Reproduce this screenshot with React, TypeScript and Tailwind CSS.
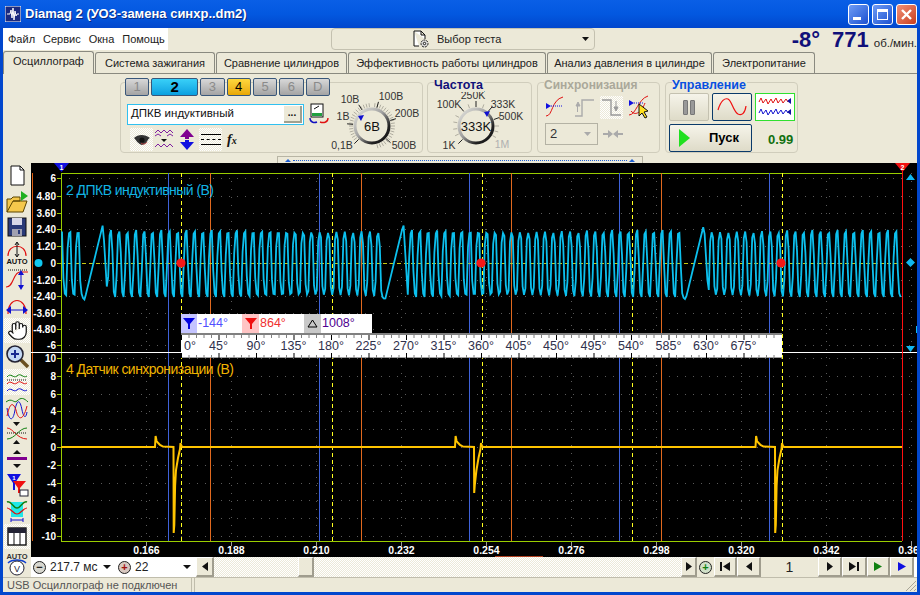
import React from 'react';
import { Hand } from 'lucide-react';

const cyanY = (x: number) => {
    const p = (((x - 84.5) % 300.5) + 300.5) % 300.5;
    if (p < 18.5) return 300 - (p / 18.5) * 76;
    if (p < 23) return 224 + ((p - 18.5) / 4.5) * 74;
    if (p > 297.9) return 297 + (p - 297.9);
    const th = ((p - 22) / 8.36) * 2 * Math.PI - Math.PI / 2;
    const n = Math.floor((p - 22) / 8.36);
    const s = Math.sin(th) + 0.16 * Math.sin(3 * th + 0.4);
    const top = 230 + (n % 3) * 1.5;
    return Math.max(top, Math.min(297, 263.5 - 37 * s));
};

const cyanPath = () => {
    let d = '';
    for (let x = 62; x <= 901; x += 1.4) {
        d += `${d ? 'L' : 'M'}${x.toFixed(1)} ${cyanY(x).toFixed(1)}`;
    }
    return d;
};

const spike = (xp: number, xn: number, deep: number) =>
    `L${xp} 447L${xp + 0.6} 436L${xp + 1.6} 441L${xp + 3.2} 443L${xp + 5} 445L${xp + 8} 446.6L${xn} 447L${xn + 0.2} ${deep}L${xn + 0.8} ${deep - 8}L${xn + 1.6} ${Math.min(deep - 15, 486)}L${xn + 2.5} 470L${xn + 4.5} 458L${xn + 6.5} 449L${xn + 7} 443L${xn + 8} 446L${xn + 9} 447`;

const yellowPath = `M61 447${spike(155, 173.5, 533)}${spike(455, 474, 493)}${spike(755.5, 775, 533)}L902 447`;

const topTicks = [
    ['6', 178], ['4.80', 196], ['3.60', 213], ['2.40', 229], ['1.20', 246], ['0', 263],
    ['-1.20', 280], ['-2.40', 296], ['-3.60', 313], ['-4.80', 329], ['-6', 345],
] as const;
const bottomTicks = [
    ['10', 358], ['8', 376], ['6', 394], ['4', 411], ['2', 429], ['0', 447],
    ['-2', 465], ['-4', 483], ['-6', 500], ['-8', 518], ['-10', 536],
] as const;
const timeLabels = ['0.166', '0.188', '0.210', '0.232', '0.254', '0.276', '0.298', '0.320', '0.342', '0.364'];
const blueX = [168.5, 319.5, 469.5, 619.5, 769.5];
const yellowX = [181.5, 332.5, 482.5, 632.5, 782.5];
const orangeX = [210.5, 361.5, 511.5, 661.5];

const Plot = () => (
    <svg viewBox="31 163 886 394" className="block w-[886px] h-[394px] bg-black font-['Liberation_Sans',sans-serif]">
        {[...topTicks, ...bottomTicks].map(([, y], i) => (
            <g key={i}>
                <line x1={61} x2={917} y1={y + 0.5} y2={y + 0.5} stroke="#5a5a5a" strokeDasharray="1 7" />
                <line x1={57} x2={61} y1={y + 0.5} y2={y + 0.5} stroke="#9acd00" />
            </g>
        ))}
        {timeLabels.map((t, i) => {
            const x = 146.5 + i * 85;
            return (
                <g key={t}>
                    <line x1={x} x2={x} y1={173} y2={541} stroke="#5a5a5a" strokeDasharray="1 7" />
                    <line x1={x} x2={x} y1={541} y2={546} stroke="#9a9a9a" />
                    <text x={x} y={554} fill="#fff" fontSize={10.5} fontWeight={700} textAnchor="middle">{t}</text>
                </g>
            );
        })}
        <path d="M32.5 173V541" stroke="#e06010" />
        <path d="M61.5 173V541M61 173.5H902M61 541.5H902" stroke="#9acd00" fill="none" />
        {blueX.map((x) => <line key={x} x1={x} x2={x} y1={173} y2={541} stroke="#3f62d8" />)}
        {orangeX.map((x) => <line key={x} x1={x} x2={x} y1={173} y2={541} stroke="#e0691f" />)}
        {yellowX.map((x) => <line key={x} x1={x} x2={x} y1={173} y2={541} stroke="#ffff20" strokeDasharray="4 3" />)}
        <line x1={61} x2={902} y1={263.5} y2={263.5} stroke="#c8c810" strokeDasharray="4 3" />
        <path d={cyanPath()} stroke="#0cc0ee" strokeWidth={1.8} fill="none" />
        <path d={yellowPath} stroke="#ffc400" strokeWidth={2} fill="none" />
        <line x1={31} x2={917} y1={352.5} y2={352.5} stroke="#fff" />
        <line x1={902.5} x2={902.5} y1={165} y2={541} stroke="#ff1010" />
        {[181, 481, 781].map((x) => <circle key={x} cx={x} cy={263} r={4.6} fill="#f51818" />)}
        <circle cx={38.5} cy={263} r={4} fill="#10c8f0" />
        <path d="M54 163H69L61.5 172Z" fill="#1010e0" />
        <text x={61.5} y={170} fill="#fff" fontSize={7} fontWeight={700} textAnchor="middle">1</text>
        <path d="M895 163H910L902.5 172Z" fill="#f01010" />
        <text x={902.5} y={170} fill="#fff" fontSize={7} fontWeight={700} textAnchor="middle">2</text>
        <path d="M906 180L910.5 174L915 180ZM906 346L910.5 352L915 346ZM906 262.5L910.5 258L915 262.5L910.5 267Z" fill="#10b8f0" />
        <rect x={916} y={326} width={1} height={7} fill="#10b8f0" />
        <rect x={495} y={556} width={48} height={1} fill="#b04020" />
        {topTicks.map(([t, y]) => (
            <text key={t} x={56} y={y + 4} fill="#fff" fontSize={10} fontWeight={700} textAnchor="end">{t}</text>
        ))}
        {bottomTicks.map(([t, y]) => (
            <text key={t} x={56} y={y + 4} fill="#fff" fontSize={10} fontWeight={700} textAnchor="end">{t}</text>
        ))}
        <text x={66} y={195} fill="#12b4e4" fontSize={14} textLength={148}>2 ДПКВ индуктивный (В)</text>
        <text x={66} y={374} fill="#f0b400" fontSize={14} textLength={168}>4 Датчик синхронизации (В)</text>
    </svg>
);

const degrees = Array.from({ length: 16 }, (_, i) => i * 45);

const AngleRuler = () => (
    <div className="absolute left-[150px] top-[151px] w-[601px] flex flex-col">
        <div className="flex h-[19px] w-[191px] items-center bg-white text-[12.5px] leading-none">
            <span className="flex h-full w-[16px] items-center justify-center bg-[#c4c4ff]">
                <svg width="12" height="11" viewBox="0 0 12 11"><path d="M0 0H12L7 6V11H5V6Z" fill="#0000e0" /></svg>
            </span>
            <span className="w-[45px] pl-[1px] text-[#5050ff]">-144°</span>
            <span className="flex h-full w-[17px] items-center justify-center bg-[#ffc4c4]">
                <svg width="12" height="11" viewBox="0 0 12 11"><path d="M0 0H12L7 6V11H5V6Z" fill="#f01010" /></svg>
            </span>
            <span className="w-[45px] pl-[1px] text-[#f03030]">864°</span>
            <span className="flex h-full w-[17px] items-center justify-center bg-[#c8c8c8]">
                <svg width="11" height="9" viewBox="0 0 11 9"><path d="M5.5 1L10 8H1Z" fill="none" stroke="#000" /></svg>
            </span>
            <span className="pl-[1px] text-[#500090]">1008°</span>
        </div>
        <div className="relative h-[25px] w-[601px] bg-white border-t-2 border-[#808080] border-b border-b-[#a0a0a0]">
            <svg className="absolute inset-0" width="601" height="23">
                {Array.from({ length: 80 }, (_, i) => {
                    const x = 0.5 + i * 7.5;
                    const major = i % 5 === 0;
                    return (
                        <g key={i} stroke={major ? '#000' : '#808080'}>
                            <line x1={x} x2={x} y1={0} y2={major ? 5 : 3} />
                            <line x1={x} x2={x} y1={major ? 18 : 20} y2={23} />
                        </g>
                    );
                })}
            </svg>
            <div className="relative flex h-full items-center text-[12.5px] leading-none whitespace-nowrap text-[#30304c]">
                {degrees.map((d) => (
                    <span key={d} className={d === 0 ? 'w-[18.75px] shrink-0 pl-[3px]' : 'w-[37.5px] shrink-0 text-center'}>{d}°</span>
                ))}
            </div>
        </div>
    </div>
);

type KnobLabel = { t: string; x: number; y: number; dim?: boolean };

const Knob = ({ cx, cy, vb, w, r, ticks, minor, labels, center, pointer, id }: {
    cx: number; cy: number; vb: string; w: number; r: number; ticks: number[]; minor: number[];
    labels: KnobLabel[]; center: string; pointer: [number, number]; id: string;
}) => {
    const ray = (a: number, r1: number, r2: number) => {
        const rad = (a * Math.PI) / 180;
        return { x1: cx + r1 * Math.sin(rad), y1: cy - r1 * Math.cos(rad), x2: cx + r2 * Math.sin(rad), y2: cy - r2 * Math.cos(rad) };
    };
    return (
        <svg viewBox={vb} width={w} height={69} className="shrink-0">
            <defs>
                <linearGradient id={id} x1="0" y1="0" x2="1" y2="1">
                    <stop offset="0" stopColor="#e6e6e0" />
                    <stop offset="0.45" stopColor="#a0a0a0" />
                    <stop offset="0.75" stopColor="#222" />
                    <stop offset="1" stopColor="#111" />
                </linearGradient>
            </defs>
            {minor.map((a) => <line key={a} {...ray(a, r + 2, r + 6)} stroke="#b0ada0" />)}
            {ticks.map((a) => <line key={a} {...ray(a, r + 2, r + 8)} stroke="#222" />)}
            <circle cx={cx} cy={cy} r={r} fill="#ece9d8" stroke={`url(#${id})`} strokeWidth={3} />
            <text x={cx} y={cy + 5} fontSize={13} textAnchor="middle" fill="#111">{center}</text>
            <path d={`M${pointer[0]} ${pointer[1]}l6 -1l-3 6z`} fill="#1010d0" />
            {labels.map((l) => (
                <text key={l.t} x={l.x} y={l.y} fontSize={10.5} textAnchor="middle" fill={l.dim ? '#b0b0b0' : '#333'}>{l.t}</text>
            ))}
        </svg>
    );
};

const voltHatch = Array.from({ length: 41 }, (_, i) => 225 + i * 7.5).filter((a) => a % 360 !== 0);
const freqHatch = [245, 262, 280, 297, 340, 20, 90, 105, 120];

const ChannelButton = ({ label, tone, wide }: { label: string; tone: 'off' | 'cyan' | 'amber'; wide?: boolean }) => {
    const toneClass =
        tone === 'cyan'
            ? 'bg-gradient-to-b from-[#38d0f8] to-[#08a0e0] text-black font-bold text-[15px]'
            : tone === 'amber'
                ? 'bg-gradient-to-b from-[#ffd83c] to-[#e8a800] text-black'
                : 'bg-gradient-to-b from-[#d8d8d8] to-[#a4a4a4] text-[#8a8a8a]';
    return (
        <div className={`flex h-[18px] items-center justify-center rounded-[2px] border border-[#39577a] text-[13px] ${toneClass} ${wide ? 'w-[48px]' : 'w-[25px]'}`}>
            {label}
        </div>
    );
};

const TitleBar = () => (
    <div className="flex h-[28px] shrink-0 items-center bg-gradient-to-b from-[#0a5fe6] via-[#0358e0] to-[#0247cd] pl-[5px] pr-[3px]">
        <svg width="16" height="16" viewBox="0 0 16 16" className="shrink-0">
            <rect width="16" height="16" fill="#1a2a80" stroke="#fff" />
            <path d="M2 8H5L6 4L7 12L8 2L9 14L10 5L11 10L12 8H14" stroke="#fff" fill="none" />
        </svg>
        <span className="ml-[4px] text-[13px] font-bold text-white [text-shadow:1px_1px_#0a2a80]">Diamag 2 (УОЗ-замена синхр..dm2)</span>
        <div className="ml-auto flex gap-[3px]">
            <div className="flex h-[21px] w-[21px] items-end rounded-[3px] border border-white bg-gradient-to-br from-[#6f9cf5] to-[#1c4fd0] p-[4px]">
                <div className="h-[3px] w-[8px] bg-white" />
            </div>
            <div className="flex h-[21px] w-[21px] items-center justify-center rounded-[3px] border border-white bg-gradient-to-br from-[#6f9cf5] to-[#1c4fd0]">
                <div className="h-[11px] w-[11px] border border-t-[3px] border-white" />
            </div>
            <div className="flex h-[21px] w-[21px] items-center justify-center rounded-[3px] border border-white bg-gradient-to-br from-[#f09078] to-[#c83c18]">
                <svg width="13" height="13" viewBox="0 0 13 13"><path d="M2 2L11 11M11 2L2 11" stroke="#fff" strokeWidth="2.4" /></svg>
            </div>
        </div>
    </div>
);

const HeaderRow = () => (
    <div className="flex h-[24px] shrink-0 items-start">
        <div className="flex h-[22px] w-[165px] items-center gap-[8px] bg-white pl-[5px] text-[11px] text-[#222]">
            <span>Файл</span><span>Сервис</span><span>Окна</span><span>Помощь</span>
        </div>
        <div className="ml-[163px] flex h-[22px] w-[264px] items-center rounded-[4px] border border-[#c4c1b0] pl-[81px] pr-[5px] text-[11px] text-[#222]">
            <svg width="17" height="19" viewBox="0 0 17 19" className="shrink-0">
                <path d="M1 1H8L12 5V9M6 16H1V1M8 1V5H12" fill="#fff" stroke="#111" />
                <circle cx="11.5" cy="13.5" r="3.5" fill="#ddd" stroke="#111" strokeDasharray="2 1" />
                <circle cx="11.5" cy="13.5" r="1.2" fill="#fff" stroke="#111" />
            </svg>
            <span className="ml-[7px]">Выбор теста</span>
            <svg width="7" height="4" viewBox="0 0 7 4" className="ml-auto"><path d="M0 0H7L3.5 4Z" fill="#111" /></svg>
        </div>
        <div className="ml-auto flex items-baseline text-[#10107a]">
            <span className="text-[22px] leading-[24px] font-bold">-8°</span>
            <span className="ml-[12px] text-[22px] leading-[24px] font-bold">771</span>
            <span className="ml-[5px] text-[11.5px] text-[#222]">об./мин.</span>
        </div>
    </div>
);

const tabs = [
    ['Система зажигания', 'w-[120px]'],
    ['Сравнение цилиндров', 'w-[131px]'],
    ['Эффективность работы цилиндров', 'w-[198px]'],
    ['Анализ давления в цилиндре', 'w-[165px]'],
    ['Электропитание', 'w-[102px]'],
] as const;

const TabRow = () => (
    <div className="flex h-[22px] shrink-0 items-end gap-[1px] border-b border-[#8a8a80] text-[11px] text-[#222]">
        <div className="z-10 -mb-px flex h-[23px] w-[91px] items-center justify-center rounded-t-[3px] border border-b-0 border-[#8a8a80] bg-[#ece9d8] pb-[3px]">Осциллограф</div>
        {tabs.map(([label, w]) => (
            <div key={label} className={`flex h-[21px] items-center justify-center whitespace-nowrap rounded-t-[3px] border border-b-0 border-[#8a8a80] bg-[#ece9d8] ${w}`}>{label}</div>
        ))}
    </div>
);

const Group = ({ title, titleClass, w, children }: { title?: string; titleClass?: string; w: string; children: React.ReactNode }) => (
    <div className={`relative flex h-[71px] shrink-0 rounded-[4px] border border-[#d0cdbc] ${w}`}>
        {title && <span className={`absolute -top-[5px] left-[6px] bg-[#ece9d8] pr-[1px] leading-[14px] font-bold ${titleClass}`}>{title}</span>}
        {children}
    </div>
);

const ChannelPanel = () => (
    <Group w="w-[303px]">
        <div className="-mt-[5px] flex w-[209px] shrink-0 flex-col pl-[4px]">
            <div className="flex gap-[2px]">
                <ChannelButton label="1" tone="off" />
                <ChannelButton label="2" tone="cyan" wide />
                <ChannelButton label="3" tone="off" />
                <ChannelButton label="4" tone="amber" />
                <ChannelButton label="5" tone="off" />
                <ChannelButton label="6" tone="off" />
                <ChannelButton label="D" tone="off" />
            </div>
            <div className="mt-[7px] flex items-center pl-[2px]">
                <div className="flex h-[21px] w-[177px] items-center border border-[#30c0f0] bg-white pl-[3px] pr-[1px] text-[11.5px] text-[#111]">
                    ДПКВ индуктивный
                    <div className="ml-auto flex h-[17px] w-[18px] items-center justify-center border-r-2 border-b-2 border-[#a0a090] bg-[#ece9d8] text-[10px] font-bold leading-none">...</div>
                </div>
                <svg width="20" height="22" viewBox="0 0 20 22" className="ml-[5px] shrink-0">
                    <rect x="2" y="1" width="12" height="13" fill="#fff" stroke="#111" />
                    <path d="M5 6L10 3" stroke="#111" />
                    <rect x="3" y="10" width="10" height="3" fill="#20a040" />
                    <path d="M1 15C1 20 6 20 8 19" stroke="#1010c0" fill="none" strokeWidth="1.4" />
                    <path d="M19 15C19 20 14 20 11 19" stroke="#e01010" fill="none" strokeWidth="1.4" />
                </svg>
            </div>
            <div className="mt-[3px] flex items-center pl-[5px]">
                <div className="flex h-[23px] w-[23px] items-center justify-center bg-[repeating-conic-gradient(#fff_0_25%,#ece9d8_0_50%)] bg-[length:2px_2px]">
                    <svg width="18" height="12" viewBox="0 0 18 12">
                        <path d="M1 4C5 0 12 0 17 4C14 5 15 9 9 11C5 10 3 6 1 4Z" fill="#333" />
                        <circle cx="9" cy="6" r="2.6" fill="#111" />
                        <path d="M8 9C10 11 13 10 14 8" stroke="#c04040" fill="none" />
                    </svg>
                </div>
                <svg width="20" height="22" viewBox="0 0 20 22" className="ml-[2px]">
                    <path d="M0 4L3 1L6 4L9 1L12 4L15 1L18 4" stroke="#8020a0" fill="none" />
                    <path d="M0 18L3 15L6 18L9 15L12 18L15 15L18 18" stroke="#8020a0" fill="none" />
                    <path d="M6 10H12L9 13Z" fill="#111" />
                    <path d="M0 7L3 5L6 7M12 7L15 5L18 7" stroke="#8020a0" fill="none" />
                </svg>
                <svg width="18" height="21" viewBox="0 0 18 21" className="ml-[3px]">
                    <path d="M9 0L16 8H11V10H7V8H2Z" fill="#800090" />
                    <path d="M9 21L16 13H11V11H7V13H2Z" fill="#1010e0" />
                </svg>
                <div className="ml-[3px] flex h-[23px] w-[23px] flex-col items-center justify-center gap-[4px] bg-[repeating-conic-gradient(#fff_0_25%,#ece9d8_0_50%)] bg-[length:2px_2px]">
                    <div className="h-px w-[20px] bg-black" />
                    <div className="h-px w-[20px] border-t border-dashed border-black" />
                    <div className="h-px w-[20px] bg-black" />
                </div>
                <span className="ml-[5px] font-['Liberation_Serif',serif] text-[14px] leading-none font-bold italic text-[#111]">f<span className="text-[10px]">x</span></span>
            </div>
        </div>
        <Knob
            id="voltRing"
            cx={372} cy={127} r={17} w={91} vb="330 84 91 69" center="6В" pointer={[358, 117]}
            ticks={[225, 275, 328, 15, 73, 132]} minor={voltHatch}
            labels={[
                { t: '10В', x: 350, y: 104 }, { t: '100В', x: 391, y: 101 }, { t: '1В', x: 343, y: 121 },
                { t: '200В', x: 407, y: 118 }, { t: '0,1В', x: 342, y: 150 }, { t: '500В', x: 404, y: 150 },
            ]}
        />
    </Group>
);

const FreqPanel = () => (
    <Group title="Частота" titleClass="text-[12.5px] text-[#10107a]" w="w-[105px]">
        <Knob
            id="freqRing"
            cx={476} cy={127} r={17} w={103} vb="428 84 103 69" center="333K" pointer={[484, 113]}
            ticks={[225, 320, 0, 40, 70]} minor={freqHatch}
            labels={[
                { t: '100K', x: 449, y: 109 }, { t: '250K', x: 473, y: 100 }, { t: '333K', x: 503, y: 109 },
                { t: '500K', x: 511, y: 121 }, { t: '1K', x: 449, y: 150 }, { t: '1M', x: 502, y: 149, dim: true },
            ]}
        />
    </Group>
);

const SyncPanel = () => (
    <Group title="Синхронизация" titleClass="text-[12px] text-[#aaa89a]" w="w-[123px]">
        <div className="flex flex-col pl-[7px] pt-[12px]">
            <div className="flex items-center">
                <svg width="20" height="22" viewBox="0 0 20 22">
                    <path d="M1 20C8 20 6 4 18 1" stroke="#e01010" fill="none" />
                    <path d="M1 7L6 10L1 13Z" fill="#1010e0" />
                    <path d="M6 10H18" stroke="#1010e0" strokeDasharray="1 1" />
                </svg>
                <svg width="22" height="22" viewBox="0 0 22 22" className="ml-[9px]">
                    <path d="M1 20H8V4H20" stroke="#aaa" fill="none" strokeWidth="1.4" />
                    <path d="M4 6L6 10H2ZM3.5 10V16" stroke="#aaa" fill="#aaa" />
                </svg>
                <div className="ml-[4px] flex h-[23px] w-[23px] items-center justify-center bg-[repeating-conic-gradient(#fff_0_25%,#ece9d8_0_50%)] bg-[length:2px_2px]">
                    <svg width="20" height="20" viewBox="0 0 20 20">
                        <path d="M0 3H9V18H19" stroke="#999" fill="none" strokeWidth="1.4" />
                        <path d="M14 14L12 10H16ZM14 10V4" stroke="#999" fill="#999" />
                    </svg>
                </div>
                <svg width="26" height="24" viewBox="0 0 26 24" className="ml-[5px]">
                    <path d="M1 20C8 20 10 4 20 1" stroke="#e01010" fill="none" />
                    <path d="M3 16C8 22 14 16 17 8" stroke="#e01010" fill="none" />
                    <path d="M1 5L6 8L1 11Z" fill="#1010e0" />
                    <path d="M6 8H16" stroke="#1010e0" strokeDasharray="1 1" />
                    <path d="M11 9L11 21L14 18L17 23L19 22L16 17L20 16Z" fill="#ffe020" stroke="#111" />
                </svg>
            </div>
            <div className="mt-[4px] flex items-center">
                <div className="flex h-[22px] w-[53px] items-center border border-[#b4b2a4] pl-[4px] text-[13px] text-[#333]">
                    2
                    <svg width="7" height="4" viewBox="0 0 7 4" className="ml-auto mr-[6px]"><path d="M0 0H7L3.5 4Z" fill="#aaa" /></svg>
                </div>
                <svg width="20" height="8" viewBox="0 0 20 8" className="ml-[5px]"><path d="M0 3H5V0L10 4L15 0V3H20V5H15V8L10 4L5 8V5H0Z" fill="#aaa" /></svg>
            </div>
        </div>
    </Group>
);

const ControlPanel = () => (
    <Group title="Управление" titleClass="text-[12.5px] text-[#0850e0]" w="w-[133px]">
        <div className="flex flex-col gap-[3px] pl-[3px] pt-[10px]">
            <div className="flex gap-[3px]">
                <div className="flex h-[28px] w-[40px] items-center justify-center gap-[2px] rounded-[2px] border border-[#c4c1b0] bg-gradient-to-b from-[#f6f4ea] to-[#dedbc8]">
                    <div className="h-[15px] w-[5px] rounded-[1px] border border-[#777] bg-[#999]" />
                    <div className="h-[15px] w-[5px] rounded-[1px] border border-[#777] bg-[#999]" />
                </div>
                <div className="flex h-[28px] w-[40px] items-center justify-center rounded-[2px] border border-[#0a3a6a] bg-gradient-to-b from-[#f6f4ea] to-[#dedbc8]">
                    <svg width="30" height="20" viewBox="0 0 30 20"><path d="M1 13C4 3 8 1 11 2C15 4 16 14 21 17C25 19 28 16 29 9" stroke="#f01010" fill="none" strokeWidth="1.2" /></svg>
                </div>
                <div className="flex h-[28px] w-[40px] items-center justify-center border border-[#30e030] bg-white">
                    <svg width="34" height="22" viewBox="0 0 34 22">
                        <path d="M1 6L3 2L5 7L8 3L10 8L13 3L15 7L18 2L20 7L23 3L25 7L28 3L30 6" stroke="#e01010" fill="none" />
                        <path d="M1 17L3 13L5 18L8 14L10 19L13 14L15 18L18 13L20 18L23 14L25 18L28 14L30 17" stroke="#1010d0" fill="none" />
                        <path d="M29 5L33 2V8ZM29 16L33 13V19Z" fill="#1010a0" />
                    </svg>
                </div>
            </div>
            <div className="flex items-center">
                <div className="flex h-[28px] w-[83px] items-center rounded-[2px] border border-[#0a3a6a] bg-gradient-to-b from-[#f6f4ea] to-[#dedbc8] pl-[9px]">
                    <svg width="11" height="18" viewBox="0 0 11 18"><path d="M0 0L11 9L0 18Z" fill="#20e020" /></svg>
                    <span className="ml-[19px] text-[13px] font-bold text-black">Пуск</span>
                </div>
                <span className="ml-[16px] mt-[4px] text-[13px] font-bold text-[#107010]">0.99</span>
            </div>
        </div>
    </Group>
);

const Toolbar = () => (
    <div className="flex h-[89px] shrink-0 flex-col pl-[117px] pt-[8px]">
        <div className="flex gap-[4px]">
            <ChannelPanel />
            <FreqPanel />
            <div className="flex gap-[5px] pl-[1px]">
                <SyncPanel />
                <ControlPanel />
            </div>
        </div>
        <div className="ml-[157px] mt-[3px] flex h-[7px] w-[366px] items-center justify-between border border-b-0 border-[#b8b5a4] px-[7px]">
            <svg width="6" height="3" viewBox="0 0 6 3"><path d="M3 0L6 3H0Z" fill="#2060d0" /></svg>
            <div className="mx-[2px] h-px flex-1 border-t border-dotted border-[#2060d0]" />
            <svg width="6" height="3" viewBox="0 0 6 3"><path d="M3 0L6 3H0Z" fill="#2060d0" /></svg>
        </div>
    </div>
);

const ToolIcon = ({ children, active }: { children: React.ReactNode; active?: boolean }) => (
    <div className={`flex h-[25.75px] w-[26px] items-center justify-center ${active ? "bg-[repeating-conic-gradient(#fff_0_25%,#ece9d8_0_50%)] bg-[length:2px_2px]" : ''}`}>
        {children}
    </div>
);

const I = ({ children }: { children: React.ReactNode }) => <svg width="24" height="24" viewBox="0 0 24 24">{children}</svg>;

const LeftTools = () => (
    <div className="flex w-[28px] shrink-0 flex-col pl-[1px]">
        <ToolIcon><I><path d="M6 2H15L19 6V21H6Z" fill="#fff" stroke="#111" /><path d="M15 2V6H19" fill="none" stroke="#111" /></I></ToolIcon>
        <ToolIcon><I><path d="M2 22V9H6L8 7H15V11H8L2 22H18L22 11H8" fill="#f4c84c" stroke="#5a4400" /><path d="M16 1L23 6L16 11Z" fill="#20b020" /></I></ToolIcon>
        <ToolIcon><I><rect x="3" y="3" width="18" height="18" fill="#2a3a78" stroke="#111" /><rect x="7" y="3" width="10" height="7" fill="#d8d8e8" /><rect x="7" y="14" width="10" height="7" fill="#a0a0b0" /><rect x="13" y="15" width="2" height="4" fill="#2a3a78" /></I></ToolIcon>
        <ToolIcon><I><path d="M3 15C3 2 21 2 21 15" fill="none" stroke="#e01010" strokeWidth="1.2" /><path d="M12 2V15M10 4L12 1L14 4M10 13L12 16L14 13" stroke="#111" fill="none" /><text x="12" y="23" textAnchor="middle" fontSize="7.5" fontWeight="700" fill="#111">AUTO</text></I></ToolIcon>
        <ToolIcon><I><path d="M1 20C9 20 8 5 15 5H23" fill="none" stroke="#e01010" strokeWidth="1.2" /><path d="M3 3H23" stroke="#111" strokeDasharray="1 1" /><path d="M16 5V21" stroke="#1010d0" /><path d="M13 8L16 3L19 8ZM13 18L16 23L19 18Z" fill="#1010d0" /></I></ToolIcon>
        <ToolIcon><I><path d="M3 21C3 3 21 3 21 21" fill="none" stroke="#e01010" strokeWidth="1.2" /><path d="M2 17H22" stroke="#1010d0" /><path d="M6 13L1 17L6 21ZM18 13L23 17L18 21Z" fill="#1010d0" /></I></ToolIcon>
        <ToolIcon active><Hand size={21} fill="#fff" strokeWidth={1.4} color="#111" /></ToolIcon>
        <ToolIcon><I><path d="M14 14L23 23" stroke="#6a5020" strokeWidth="3.4" /><circle cx="10" cy="10" r="8" fill="#c4d8f4" stroke="#223" strokeWidth="1.6" /><path d="M10 6V14M6 10H14" stroke="#1a2a90" strokeWidth="2" /></I></ToolIcon>
        <ToolIcon active><I><path d="M2 7C6 2 8 9 12 6C16 2 18 9 22 6" stroke="#108010" fill="none" /><path d="M2 10H22" stroke="#111" strokeDasharray="1 1" /><path d="M2 14C6 9 8 16 12 13C16 9 18 16 22 13" stroke="#e01010" fill="none" /><path d="M2 21C6 16 8 23 12 20C16 16 18 23 22 20" stroke="#1010d0" fill="none" /></I></ToolIcon>
        <ToolIcon><I><path d="M1 6C7 1 9 8 12 5C16 1 19 2 23 6" stroke="#108010" fill="none" /><path d="M2 12C4 26 8 26 10 14C12 3 15 3 17 14C19 23 21 22 22 16" stroke="#1010d0" fill="none" /><path d="M2 20C5 6 8 6 11 14C13 24 18 26 22 10" stroke="#e01010" fill="none" /></I></ToolIcon>
        <ToolIcon><I><path d="M2 7C8 7 12 18 22 18" stroke="#e01010" fill="none" /><path d="M2 18C10 18 14 7 22 7" stroke="#108010" fill="none" /><path d="M2 12H22" stroke="#111" strokeDasharray="1 1" /><path d="M8 1H15L11.5 5ZM8 23H15L11.5 19Z" fill="#111" /></I></ToolIcon>
        <ToolIcon><I><path d="M8 7L12 3L16 7ZM8 17L12 21L16 17Z" fill="#111" /><rect x="2" y="10" width="20" height="3" fill="#800090" /></I></ToolIcon>
        <ToolIcon><I><path d="M2 1H16L10 10V17H8V10Z" fill="#1010e0" /><path d="M8 8H21L15 15V20H13V15Z" fill="#f01010" /><rect x="15" y="17" width="8" height="6" fill="#fff" stroke="#223" /><text x="9" y="7" textAnchor="middle" fontSize="6" fontWeight="700" fill="#fff">1</text></I></ToolIcon>
        <ToolIcon><I><path d="M6 3H18V18H6Z" fill="#20e8e8" /><path d="M2 3C6 1 8 9 12 9C16 9 18 1 22 3" stroke="#108010" fill="none" strokeWidth="1.4" /><path d="M2 9C6 9 8 15 12 15C16 15 18 9 22 9" stroke="#e01010" fill="none" strokeWidth="1.2" /><path d="M6 21H18M6 19V23M18 19V23" stroke="#1010d0" /></I></ToolIcon>
        <ToolIcon active><I><rect x="3" y="4" width="18" height="17" fill="#fff" stroke="#111" strokeWidth="1.4" /><rect x="3" y="4" width="18" height="5" fill="#223" /><path d="M9 9V21M15 9V21" stroke="#111" /></I></ToolIcon>
        <div className="mt-[2px]">
            <ToolIcon><I><text x="12" y="7" textAnchor="middle" fontSize="7.5" fontWeight="700" fill="#333">AUTO</text><path d="M3 11C7 7 17 7 21 11" stroke="#1040d0" fill="none" strokeWidth="1.5" /><circle cx="12" cy="16" r="7" fill="#fff" stroke="#223" /><text x="12" y="20" textAnchor="middle" fontSize="9" fill="#223">V</text></I></ToolIcon>
        </div>
    </div>
);

const Bevel = ({ w, children }: { w: string; children?: React.ReactNode }) => (
    <div className={`flex h-[20px] shrink-0 items-center justify-center border-t border-l border-white border-r-2 border-b-2 border-r-[#a09d8e] border-b-[#a09d8e] bg-[#ece9d8] ${w}`}>
        {children}
    </div>
);

const Tri = ({ dir = 'r', color = '#111' }: { dir?: 'l' | 'r'; color?: string }) => (
    <svg width="6" height="9" viewBox="0 0 6 9"><path d={dir === 'r' ? 'M0 0L6 4.5L0 9Z' : 'M6 0L0 4.5L6 9Z'} fill={color} /></svg>
);

const ZoomBtn = ({ plus }: { plus?: boolean }) => (
    <div className="flex h-[20px] w-[17px] shrink-0 items-center justify-center">
        <div className={`flex h-[13px] w-[13px] items-center justify-center rounded-full border border-[#222] text-[11px] font-bold leading-none ${plus ? 'bg-[#d8c8c0] text-[#a01010]' : 'bg-[#d8d8d0] text-[#222]'}`}>{plus ? '+' : '−'}</div>
    </div>
);

const Combo = ({ value, w }: { value: string; w: string }) => (
    <div className={`flex h-[20px] shrink-0 items-center whitespace-nowrap bg-white pl-[2px] pr-[5px] text-[12px] text-[#222] ${w}`}>
        {value}
        <svg width="8" height="4" viewBox="0 0 8 4" className="ml-auto"><path d="M0 0H8L4 4Z" fill="#111" /></svg>
    </div>
);

const BottomStrip = () => (
    <div className="flex h-[20px] shrink-0 items-center bg-white">
        <ZoomBtn />
        <Combo value="217.7 мс" w="w-[68px]" />
        <ZoomBtn plus />
        <Combo value="22" w="w-[63px]" />
        <Bevel w="w-[18px]"><Tri dir="l" /></Bevel>
        <div className="h-[20px] w-[84px] shrink-0 bg-[repeating-conic-gradient(#fff_0_25%,#ece9d8_0_50%)] bg-[length:2px_2px]" />
        <Bevel w="w-[16px]" />
        <div className="h-[20px] w-[367px] shrink-0 bg-[repeating-conic-gradient(#fff_0_25%,#ece9d8_0_50%)] bg-[length:2px_2px]" />
        <Bevel w="w-[16px]"><Tri /></Bevel>
        <div className="flex h-[20px] w-[17px] shrink-0 items-center justify-center bg-[#ece9d8]">
            <div className="flex h-[13px] w-[13px] items-center justify-center rounded-full border border-[#222] bg-[#d0e0c8] text-[11px] font-bold leading-none text-[#108010]">+</div>
        </div>
        <Bevel w="w-[23px]"><svg width="10" height="9" viewBox="0 0 10 9"><path d="M0 0H2V9H0ZM10 0L3 4.5L10 9Z" fill="#111" /></svg></Bevel>
        <Bevel w="w-[24px]"><Tri dir="l" /></Bevel>
        <div className="flex h-[20px] w-[57px] shrink-0 items-center justify-center bg-[#ece9d8] text-[14px] text-[#222]">1</div>
        <Bevel w="w-[24px]"><Tri /></Bevel>
        <Bevel w="w-[25px]"><svg width="10" height="9" viewBox="0 0 10 9"><path d="M8 0H10V9H8ZM0 0L7 4.5L0 9Z" fill="#111" /></svg></Bevel>
        <Bevel w="w-[23px]"><svg width="8" height="9" viewBox="0 0 8 9"><path d="M0 0L8 4.5L0 9Z" fill="#108010" /></svg></Bevel>
        <Bevel w="w-[24px]"><svg width="8" height="9" viewBox="0 0 8 9"><path d="M0 0L8 4.5L0 9Z" fill="#1010e0" /></svg></Bevel>
    </div>
);

const StatusBar = () => (
    <div className="flex h-[15px] shrink-0 items-center gap-[2px] border-t border-[#c0bdac] text-[11px] leading-none text-[#555]">
        <div className="flex h-full w-[189px] items-center whitespace-nowrap border-r border-[#c0bdac] pl-[4px]">USB Осциллограф не подключен</div>
        <div className="h-full flex-1 border-l border-[#c0bdac]" />
        <svg width="12" height="12" viewBox="0 0 12 12" className="shrink-0 self-end">
            <path d="M11 1L1 11M11 5L5 11M11 9L9 11" stroke="#a8a596" />
        </svg>
    </div>
);

const App = () => (
    <div className="flex h-[595px] w-[920px] flex-col overflow-hidden bg-[#0247cd] font-['Liberation_Sans',sans-serif]">
        <TitleBar />
        <div className="mx-[3px] mb-[3px] flex min-h-0 flex-1 flex-col bg-[#ece9d8]">
            <HeaderRow />
            <TabRow />
            <Toolbar />
            <div className="flex shrink-0">
                <LeftTools />
                <div className="relative flex w-[886px] shrink-0 flex-col">
                    <Plot />
                    <AngleRuler />
                    <BottomStrip />
                </div>
            </div>
            <StatusBar />
        </div>
    </div>
);

export default App;
